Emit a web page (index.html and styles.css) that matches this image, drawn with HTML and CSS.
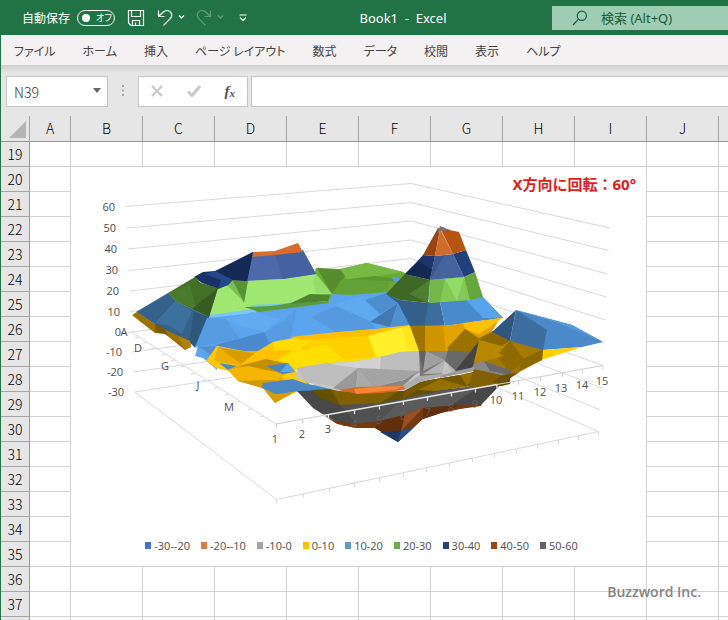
FILE: index.html
```html
<!DOCTYPE html>
<html lang="ja">
<head>
<meta charset="utf-8">
<meta name="viewport" content="width=device-width, initial-scale=1">
<title>Book1 - Excel</title>
<link rel="stylesheet" href="styles.css">
</head>
<body>
<div class="app">
  <header class="titlebar">
    <div class="quick">
      <label class="autosave">自動保存
        <input type="checkbox" class="autosave-input" role="switch">
        <span class="switch"><span class="knob"></span>オフ</span>
      </label>
      <button class="icon-btn save" aria-label="上書き保存">
        <svg width="18" height="18" viewBox="0 0 18 18"><path d="M1.5 1.5h15v15H4l-2.500-2.500zM4.500 1.500v6h9v-6M5.500 16.500v-5h7v5M8.500 16.500v-3" /></svg>
      </button>
      <button class="icon-btn undo" aria-label="元に戻す">
        <svg width="28" height="18" viewBox="0 0 28 18"><path d="M1.500 1.500v6h6M1.500 7.500L6 3.200C8.500 .8 12 1 13.700 3.300c1.700 2.300 1.200 4.600-.7 6.500L6.500 16.300"/><path d="M22 6.500l2.500 2.500L27 6.500"/></svg>
      </button>
      <button class="icon-btn redo" aria-label="やり直し" disabled>
        <svg width="28" height="18" viewBox="0 0 28 18"><path d="M14.500 1.500v6h-6M14.500 7.500L10 3.200C7.500 .8 4 1 2.300 3.300.6 5.600 1.100 7.900 3 9.800l6.500 6.500"/><path d="M22 6.500l2.500 2.500L27 6.500"/></svg>
      </button>
      <button class="icon-btn more" aria-label="クイック アクセス ツール バーのユーザー設定">
        <svg width="8" height="8" viewBox="0 0 8 8"><path d="M.5 1h7M1 3.500l3 3 3-3"/></svg>
      </button>
    </div>
    <h1 class="doc-title">Book1&nbsp; -&nbsp; Excel</h1>
    <div class="search">
      <svg width="16" height="16" viewBox="0 0 16 16"><circle cx="9.800" cy="5.800" r="4.600"/><path d="M6.500 9.200L1 15"/></svg>
      <input type="text" class="search-input" placeholder="検索 (Alt+Q)" aria-label="検索">
    </div>
  </header>

  <nav class="tabs">
    <a href="#">ファイル</a><a href="#">ホーム</a><a href="#">挿入</a><a href="#">ページ レイアウト</a><a href="#">数式</a><a href="#">データ</a><a href="#">校閲</a><a href="#">表示</a><a href="#">ヘルプ</a>
  </nav>

  <div class="formula-row">
    <div class="name-box">
      <input type="text" value="N39" aria-label="名前ボックス">
      <button aria-label="名前の一覧"><svg width="8" height="5" viewBox="0 0 8 5"><path d="M0 0h8L4 5z"/></svg></button>
    </div>
    <svg class="grip" width="3" height="12" viewBox="0 0 3 12"><path d="M0 0h2v2H0zM0 4.500h2v2H0zM0 9h2v2H0z"/></svg>
    <div class="fx-box">
      <button aria-label="キャンセル"><svg width="12" height="12" viewBox="0 0 12 12"><path d="M1 1l10 10M11 1L1 11"/></svg></button>
      <button aria-label="入力"><svg width="14" height="12" viewBox="0 0 14 12"><path class="check" d="M1 6.500l4 4L13 1"/></svg></button>
      <button class="fx" aria-label="関数の挿入">f<small>x</small></button>
    </div>
    <input type="text" class="formula" aria-label="数式バー">
  </div>

  <main class="sheet">
    <table class="grid">
      <colgroup><col class="c-head"><col class="c-a"><col class="c"><col class="c"><col class="c"><col class="c"><col class="c"><col class="c"><col class="c"><col class="c"><col class="c"><col></colgroup>
      <thead><tr><th class="corner"><svg width="17" height="17" viewBox="0 0 17 17"><path d="M17 0v17H0z"/></svg></th><th>A</th><th>B</th><th>C</th><th>D</th><th>E</th><th>F</th><th>G</th><th>H</th><th>I</th><th>J</th><th></th></tr></thead>
      <tbody>
        <tr><th>19</th><td></td><td></td><td></td><td></td><td></td><td></td><td></td><td></td><td></td><td></td><td></td></tr>
        <tr><th>20</th><td></td><td></td><td></td><td></td><td></td><td></td><td></td><td></td><td></td><td></td><td></td></tr>
        <tr><th>21</th><td></td><td></td><td></td><td></td><td></td><td></td><td></td><td></td><td></td><td></td><td></td></tr>
        <tr><th>22</th><td></td><td></td><td></td><td></td><td></td><td></td><td></td><td></td><td></td><td></td><td></td></tr>
        <tr><th>23</th><td></td><td></td><td></td><td></td><td></td><td></td><td></td><td></td><td></td><td></td><td></td></tr>
        <tr><th>24</th><td></td><td></td><td></td><td></td><td></td><td></td><td></td><td></td><td></td><td></td><td></td></tr>
        <tr><th>25</th><td></td><td></td><td></td><td></td><td></td><td></td><td></td><td></td><td></td><td></td><td></td></tr>
        <tr><th>26</th><td></td><td></td><td></td><td></td><td></td><td></td><td></td><td></td><td></td><td></td><td></td></tr>
        <tr><th>27</th><td></td><td></td><td></td><td></td><td></td><td></td><td></td><td></td><td></td><td></td><td></td></tr>
        <tr><th>28</th><td></td><td></td><td></td><td></td><td></td><td></td><td></td><td></td><td></td><td></td><td></td></tr>
        <tr><th>29</th><td></td><td></td><td></td><td></td><td></td><td></td><td></td><td></td><td></td><td></td><td></td></tr>
        <tr><th>30</th><td></td><td></td><td></td><td></td><td></td><td></td><td></td><td></td><td></td><td></td><td></td></tr>
        <tr><th>31</th><td></td><td></td><td></td><td></td><td></td><td></td><td></td><td></td><td></td><td></td><td></td></tr>
        <tr><th>32</th><td></td><td></td><td></td><td></td><td></td><td></td><td></td><td></td><td></td><td></td><td></td></tr>
        <tr><th>33</th><td></td><td></td><td></td><td></td><td></td><td></td><td></td><td></td><td></td><td></td><td></td></tr>
        <tr><th>34</th><td></td><td></td><td></td><td></td><td></td><td></td><td></td><td></td><td></td><td></td><td></td></tr>
        <tr><th>35</th><td></td><td></td><td></td><td></td><td></td><td></td><td></td><td></td><td></td><td></td><td></td></tr>
        <tr><th>36</th><td></td><td></td><td></td><td></td><td></td><td></td><td></td><td></td><td></td><td></td><td></td></tr>
        <tr><th>37</th><td></td><td></td><td></td><td></td><td></td><td></td><td></td><td></td><td></td><td></td><td></td></tr>
        <tr><th></th><td></td><td></td><td></td><td></td><td></td><td></td><td></td><td></td><td></td><td></td><td></td></tr>
      </tbody>
    </table>

    <figure class="chart">
      <figcaption>X方向に回転：60°</figcaption>
      <svg class="plot" viewBox="71 167 575 360" role="img" aria-label="3-D 等高線グラフ">
        <!-- walls and floor -->
        <g class="wall">
          <path d="M125 206.500L411 183.500 610 228M127 228L411 202.500 608.500 250.500M128 249L411 221 607.500 274M129 270.500L411 240 606.500 297M130 291L411 258.500 605.500 320M130 311.500L411 277.500 604.500 343M131 332L411 296 603 365.500M132 352L411 315 602 388M133 372L411 333 600.500 410M135 392L411 350 598.500 431.500"/>
          <path d="M131 332L276 424M135 392L276.500 499.500 598.500 431.500"/>
          <path d="M131 332l-4 1M139 337l-4 1M147 342l-4 1M156 348l-4 1M166 354l-4 1M175 360l-4 1M185 366l-4 1M195 373l-4 1M206 380l-4 1M218 387l-4 1M229 394l-4 1M240 401l-4 1M252 409l-4 1M264 416l-4 1"/>
          <path d="M276.500 499.500v4M303.500 494v4M329.500 488.500v4M354.500 483v4M379.500 478v4M403.500 473v4M426.500 468v4M449.500 463v4M472.500 458.500v4M494.500 453.500v4M516.500 449v4M537.500 444.500v4M558.500 440v4M578.500 435.500v4M598.500 431.500v4"/>
        </g>
        <!-- rear ridge and left mountain -->
        <g>
          <path fill="#6aa939" d="M316 268l24 1 27-6 36 9 8 5-24 20-37 3-19 2-22-5z"/>
          <path fill="#578d2f" d="M317 268l23 2 5 6-13 18z"/>
          <path fill="#76b943" d="M341 269l26-6 36 9-30 5-25 4z"/>
          <path fill="#5c9834" d="M341 280l33-4 29 3-2 4-12-2z"/>
          <path fill="#62a237" d="M341 280l48 1-2 12-55 2z"/>
          <path fill="#579fe8" d="M391 277l6 0 8 4-10 1z"/>
          <path fill="#5ca5ee" d="M207 317l46-6 42-6 35-3 1-8 19 1 37-3 13 10 20 23-1 15-66-3-75 9-20 6-15 8-25-6-1 16-14-12-8-2z"/>
          <path fill="#a1e873" d="M209 317l9-29 15-8 14 1 36-2 33-5 16 20-22 1-15 8-30 4-13 0 5 4z"/>
          <path fill="#96dc69" d="M316 274l16 20-16-1-3-10z"/>
          <path fill="#78c7fb" d="M207 318l2-3 46-6 1 4zM250 305l28-1 17-2-5 4-32 2z"/>
          <path fill="#5a9c39" d="M244 307l27-1 20-3 38-2 0 2-70 9z"/>
          <path fill="#4e8531" d="M289 304l21-10 20 1-2 6-37 3z"/>
          <path fill="#579437" d="M232 280l16 1-4 22z"/>
          <path fill="#7cbd55" d="M232 280l-5 5 17 17z"/>
          <path fill="#4d69a9" d="M252 256l23-2 28-4 13 24-33 5-37 2z"/>
          <path fill="#4661a0" d="M275 254l28-3 13 23-33 5z"/>
          <path fill="#d46d2d" d="M253 252l22-1 23-8 5 9-28 3-23 2z"/>
          <path fill="#183265" d="M194 277l9-5 12-1 38-19-6 29-15-1-4 5-10 4-16-6z"/>
          <path fill="#142955" d="M253 252l-6 29-14-1-17-8z"/>
          <path fill="#23488c" d="M215 271l18 9-5 5-10 3 3-8-16-6z"/>
          <path fill="#427027" d="M168 293l27-16 6 6 17 5-9 29-32-15z"/>
          <path fill="#4a7b2c" d="M177 289l-9 4 9 9 19 7-6-24z"/>
          <path fill="#375b22" d="M218 288l-9 29-17-8z"/>
          <path fill="#34628b" d="M136 312l32-19 9 9 32 15-14 31-5-6-20-9-14-8z"/>
          <path fill="#3c719d" d="M155 323l20-22 17 10-10 23-12-8z"/>
          <path fill="#2e577c" d="M209 317l-14 30-6-5 5-30z"/>
          <path fill="#9c7300" d="M132 315l5-3 19 13 14 7 20 9 1 6-6 3-20-16-10-1-13-10z"/>
          <path fill="#7c5b00" d="M155 324l9 4 4 8-3-2-10-2z"/>
          <path fill="#b08400" d="M178 336l12 5 1 5-6 4z"/>
        </g>
        <!-- blue slope facets -->
        <g>
          <path fill="#4b8bcd" d="M265 332l-22 19-28-6zM265 332l8 10-15 9-15 0z"/>
          <path fill="#538fcd" d="M195 347l20-1 28-6-28 6 1 14-13-11z"/>
          <path fill="#579be0" d="M207 318l-12 29 45-8-14-20zM285 320l12-13-6 30-22 6-5-11z"/>
          <path fill="#62abf0" d="M226 319l27-7 27 7-15 13-23-5z"/>
          <path fill="#5599de" d="M311 317l26-12 33 17 6 7-40 3z"/>
          <path fill="#5fa9ef" d="M334 305l27-9 37 7-28 18z"/>
          <path fill="#4b8fce" d="M365 300l22-7 11 10-18 11z"/>
          <path fill="#4179b0" d="M398 303l-28 19 20 5z"/>
          <path fill="#4e91d2" d="M398 303l12 23-20 1z"/>
        </g>
        <!-- yellow belt and left shore -->
        <g>
          <path fill="#ffc800" d="M217 346l26 5 15 0 15-9 27-5 40-5 36-3 34-4 9 26-19 3-20 5-24 4-30 2-30 5-30 2-33 0-17-4-10-7z"/>
          <path fill="#ffdb00" d="M273 342l27-5 26-3 43 2 12 21-25 4-30 2-30 6-20-10z"/>
          <path fill="#ffcf00" d="M300 348l26-14 43 2 8 21-45 3z"/>
          <path fill="#ffdf00" d="M280 358l45-14 20 17-48 8z"/>
          <path fill="#ffbf00" d="M290 337l48-5 40-3 12-1-20 8-24 1-44 3z"/>
          <path fill="#fff02a" d="M368 336l22-6 20-4 10 25-20 2-24 4z"/>
          <path fill="#ffe51c" d="M402 328l8-2 9 25-10 1z"/>
          <path fill="#4a8acb" d="M215 360l4 3 19 3-4 5-6-1z"/>
          <path fill="#edb000" d="M218 347l25 4 15 0-18 14-22-3-4-2z"/>
          <path fill="#d99d00" d="M218 347l38 7-15 10z"/>
          <path fill="#ffc000" d="M258 351l-18 14 38-6 15-9z"/>
          <path fill="#e8aa00" d="M236 366l22-4 30 2 7 7 5 4 10 9-5 6-9 2-12 6-9 5-12-15-25-7-10-11z"/>
          <path fill="#c59000" d="M238 366l28-7 23 5-10 8z"/>
          <path fill="#f4b600" d="M228 370l20-4 35 8-6 6-39 1z"/>
          <path fill="#d19900" d="M238 381l39-1-15 8z"/>
          <path fill="#ffcd00" d="M281 376l14-6 10 9 2 6-22-5z"/>
          <path fill="#4784c1" d="M266 366l22-3 7 9-13 2z"/>
          <path fill="#5ca4ee" d="M288 363l-8 9 15 0z"/>
          <path fill="#4a87c5" d="M263 383l30-4 14 5 35 5-2 2-42 0-23 4-13-7z"/>
          <path fill="#d69c00" d="M263 388l12 6 17-1-17 10z"/>
        </g>
        <!-- underside -->
        <g>
          <path fill="#484848" d="M297 391l45-1 98 0 62-7-20 21-23 5-50 9-30 4-35 4-20-11-11-7z"/>
          <path fill="#5a5a5a" d="M340 405l63-7 37-7 40-5-38 25-62 11z"/>
          <path fill="#515151" d="M340 404l16 20 24-3 23-23z"/>
          <path fill="#655000" d="M311 390l20-1 26 5 46-5 15-7 42-7 18-4 32 7 0 6-8 2-42 0-24 5-30 7-26 5-40 2-20-7z"/>
          <path fill="#806000" d="M331 389l26 5 46-6-23 15-40 2z"/>
          <path fill="#967100" d="M406 389l14-7 40-7 20-4-14 16-30 4z"/>
          <path fill="#785a00" d="M476 369l34 7-9 8-33 4z"/>
          <path fill="#745700" d="M418 390l22-11 28 8-8-12-42 7-12 6-4 11z"/>
          <path fill="#733910" d="M323 415l10 5 23 4 24-3 23-6 20-7 37-3 22-1-1 2-21 3-19 4-18 6-25 23-23-14-20 0-18-4z"/>
          <path fill="#995020" d="M376 428l27-13 20-7-22 23z"/>
          <path fill="#612f0d" d="M380 421l-5 7 7 4 19-1 4-16zM423 408l37-3-19 8-18 6z"/>
          <path fill="#1f3763" d="M380 432l20-1 12-2-14 13z"/>
          <path fill="#294d89" d="M398 442l3-12 12-2z"/>
        </g>
        <!-- grey basin -->
        <g>
          <path fill="#c6c6c6" d="M297 368l30-5 30-2 23-4 20-5 20-1 18 0 24 20-42 11-16 9-46 1-20-1-20-5-22-8z"/>
          <path fill="#bdbdbd" d="M297 368l30-5 31 5-20 19-33-5z"/>
          <path fill="#d2d2d2" d="M330 364l27-3 24-4-1 12-22-1z"/>
          <path fill="#bebebe" d="M381 357l19-5 19-1 4 20-43-2z"/>
          <path fill="#999999" d="M358 368l-25 20 10 3 13-2z"/>
          <path fill="#aaaaaa" d="M358 368l18 20-20 1z"/>
          <path fill="#8c8c8c" d="M358 368l23 9-7 10z"/>
          <path fill="#a4a4a4" d="M358 368l65 3-17 8-32 8z"/>
          <path fill="#878787" d="M374 387l30-7 14-8-15 14z"/>
          <path fill="#aeaeae" d="M403 386l17-11 55-7 3 2-37 7-21 5-14 7z"/>
          <path fill="#d66a24" d="M339 390l18-3 46-1 3 3-23 4-26 1z"/>
          <path fill="#f68536" d="M354 389l20-2 30-1-10 4-38 4z"/>
          <path fill="#767676" d="M419 351l42-1 19 4-2 16-18 2-40 4z"/>
          <path fill="#a0a0a0" d="M425 350l20 10-22 11z"/>
          <path fill="#878787" d="M425 350l35 0-15 10z"/>
          <path fill="#5e5e5e" d="M460 350l6-1 7 19-13 4-15-12z"/>
          <path fill="#b3b3b3" d="M445 360l14 13-36 1z"/>
          <path fill="#c3c3c3" d="M445 360l-3 14 11 0z"/>
          <path fill="#626262" d="M419 351l7-1-3 21z"/>
        </g>
        <!-- central peak -->
        <g>
          <path fill="#335f89" d="M386 294l14 6 29 3-3 23-16 0-12-23z"/>
          <path fill="#3b6e9d" d="M428 302l12 0 5 24-20 0z"/>
          <path fill="#488bcc" d="M440 302l42-6 21 22-23 3-35 5z"/>
          <path fill="#58a3eb" d="M466 300l16-4 21 22-20 0z"/>
          <path fill="#9e7400" d="M410 326l17-1-2 26-6 0z"/>
          <path fill="#ce9500" d="M425 326l20-1 3 26-23 0z"/>
          <path fill="#e2a200" d="M443 326l37-5 20-3-7 12-18 14-20 7-9 0z"/>
          <path fill="#ffc100" d="M463 323l40-5-24 16-14-5z"/>
          <path fill="#3f6827" d="M405 274l25 6-2 23-28-3-14-6z"/>
          <path fill="#4d7f30" d="M430 280l-2 23-19-9z"/>
          <path fill="#82c957" d="M430 280l34-3 7 23-42 3z"/>
          <path fill="#73b64a" d="M430 280l15-1-5 23-11 1z"/>
          <path fill="#91dc64" d="M445 279l19-2-7 24z"/>
          <path fill="#65a63d" d="M464 277l11-5 8 25-13 3z"/>
          <path fill="#1c356b" d="M423 255l12 1-5 24-25-6 8-8z"/>
          <path fill="#132950" d="M413 266l6-5 13 9-3 9-24-5z"/>
          <path fill="#46639f" d="M435 256l18-2 11 23-34 3z"/>
          <path fill="#3b568e" d="M435 256l9 0-14 24z"/>
          <path fill="#233f79" d="M453 254l13-4 9 22-11 5z"/>
          <path fill="#974611" d="M438 228l2 1-5 27-12-1z"/>
          <path fill="#d16b2b" d="M440 229l13 25-18 2z"/>
          <path fill="#b65412" d="M440 228l19 4 7 18-13 4z"/>
          <path fill="#747474" d="M440 226l10 4-10 1-3 3z"/>
        </g>
        <!-- right hill -->
        <g>
          <path fill="#4a8aca" d="M516 310l56 15 31 17-21 5-39 3-10-25z"/>
          <path fill="#5498de" d="M516 310l42 13 45 19-31-17z"/>
          <path fill="#ffcf00" d="M543 350l39-3-41 13z"/>
          <path fill="#a27800" d="M465 329l14 9 13-7 19 10 32 8-1 11-32 17-30-10-8-4-25-15z"/>
          <path fill="#b88900" d="M479 340l13-8 18 9-14 14z"/>
          <path fill="#8a6700" d="M479 340l13-8 18 9-8 5z"/>
          <path fill="#9a7200" d="M465 329l14 11-8 13-23-3z"/>
          <path fill="#8e6a00" d="M510 341l15 19-15 14-13-18z"/>
          <path fill="#a47a00" d="M510 341l33 8-18 11z"/>
          <path fill="#8b6700" d="M543 349l-1 11-24 11 5-12z"/>
          <path fill="#bd8c00" d="M479 340l18 15-23 7z"/>
          <path fill="#696969" d="M448 350l24 3-16 18-11-10z"/>
          <path fill="#444444" d="M479 341l-7 29-17 1z"/>
          <path fill="#b68700" d="M479 341l-3 23 28-8z"/>
          <path fill="#888888" d="M475 363l9-2 28 10-1 5-10 0-30-7z"/>
          <path fill="#696969" d="M484 361l28 10-2 4-20-4z"/>
          <path fill="#9c9c9c" d="M440 376l16-5 19-4-1 4-34 7z"/>
          <path fill="#806000" d="M474 369l27 6 18-3-18 12-33 4z"/>
          <path fill="#6b5100" d="M501 376l17-3-17 11-8-2z"/>
          <path fill="#2e567f" d="M516 310l-24 22 18 9z"/>
          <path fill="#3d6e9f" d="M516 310l31 20-4 20-33-9z"/>
        </g>
        <!-- series axis -->
        <path class="axis" d="M276 424L323 415.500M497 384.500L603 365.500M276.500 424v4M302.500 419v4M518.500 381v4M540.500 377v4M562.500 373v4M582.500 369v4M603 365.500v4"/>
        <path class="axis-over" d="M323 415.500L497 384.500M328.500 414.500v4M354.500 410v4M379.500 405.500v4M403.500 401v4M427.500 397v4M451.500 392.500v4M475.500 388.500v4M497 384.500v4"/>
        <g class="lbl lbl-end">
          <text x="115" y="211">60</text><text x="116" y="232">50</text><text x="117" y="253">40</text><text x="118" y="274">30</text><text x="119" y="295">20</text><text x="120" y="316">10</text><text x="121" y="336">0</text><text x="122" y="356">-10</text><text x="123" y="376">-20</text><text x="124" y="396">-30</text>
        </g>
        <g class="lbl lbl-mid">
          <text x="124" y="336">A</text><text x="138" y="352">D</text><text x="165" y="370">G</text><text x="198" y="389">J</text><text x="229" y="411">M</text>
          <text x="275" y="443">1</text><text x="302" y="438">2</text><text x="328" y="433">3</text><text x="496" y="404">10</text><text x="518" y="400">11</text><text x="540" y="396">12</text><text x="561" y="392">13</text><text x="582" y="389">14</text><text x="602" y="385">15</text>
        </g>
        <g class="lbl lbl-mid lbl-dim">
          <text x="354" y="428">4</text><text x="379" y="424">5</text><text x="403" y="420">6</text><text x="428" y="416">7</text><text x="451" y="412">8</text><text x="475" y="408">9</text>
        </g>
      </svg>
      <ul class="legend">
        <li><i class="k1"></i>-30--20</li><li><i class="k2"></i>-20--10</li><li><i class="k3"></i>-10-0</li><li><i class="k4"></i>0-10</li><li><i class="k5"></i>10-20</li><li><i class="k6"></i>20-30</li><li><i class="k7"></i>30-40</li><li><i class="k8"></i>40-50</li><li><i class="k9"></i>50-60</li>
      </ul>
    </figure>
    <p class="watermark">Buzzword Inc.</p>
  </main>
</div>
</body>
</html>
```
FILE: styles.css
```css
* { box-sizing: border-box; }
html, body { height: 100%; }
body {
  margin: 0;
  overflow: hidden;
  background: #fff;
  font-family: "Noto Sans", "Noto Sans CJK JP", sans-serif;
  font-size: 12px;
  color: #444;
}
button { margin: 0; padding: 0; border: 0; background: none; font: inherit; color: inherit; }
input { font: inherit; }

.app { display: flex; flex-direction: column; height: 100%; border-left: 1px solid #217346; }

/* title bar */
.titlebar {
  flex: none;
  display: grid;
  grid-template-columns: 253px 1fr 176px;
  align-items: center;
  height: 35px;
  background: #217346;
  color: #fff;
}
.quick { display: flex; align-items: center; padding-left: 21px; }
.autosave { display: flex; align-items: center; gap: 7px; white-space: nowrap; }
.autosave-input { position: absolute; opacity: 0; }
.switch {
  display: flex;
  align-items: center;
  gap: 6px;
  width: 38px;
  height: 16px;
  padding-left: 4px;
  border: 1px solid #fff;
  border-radius: 8px;
  font-size: 9px;
  font-feature-settings: "palt";
}
.knob { width: 8px; height: 8px; border-radius: 50%; background: #fff; }
.icon-btn { display: flex; flex: none; }
.icon-btn svg { fill: none; stroke: #fff; stroke-width: 1.2; }
.save { margin-left: 12px; }
.undo { margin-left: 12px; }
.redo { margin-left: 11px; opacity: .3; }
.more { margin-left: 15px; }
.doc-title { margin: 0; text-align: center; font-size: 13px; font-weight: 400; }
.search {
  display: flex;
  align-items: center;
  gap: 13px;
  height: 24px;
  padding-left: 20px;
  background: #9fcdb3;
  font-size: 13px;
}
.search svg { flex: none; fill: none; stroke: #185c37; stroke-width: 1.2; }
.search-input { width: 100%; min-width: 0; padding: 0; border: 0; outline: 0; background: none; color: #185c37; }
.search-input::placeholder { color: #185c37; opacity: 1; }

/* ribbon tabs */
.tabs {
  flex: none;
  display: flex;
  align-items: center;
  gap: 27px;
  height: 30px;
  padding-left: 13px;
  background: #f3f1f1;
  font-family: "Noto Sans CJK JP", sans-serif;
  font-size: 12px;
  font-feature-settings: "palt";
  white-space: nowrap;
}
.tabs a { color: #444; text-decoration: none; }

/* formula bar */
.formula-row {
  flex: none;
  display: flex;
  align-items: center;
  height: 51px;
  padding: 1px 0 0 5px;
  background: linear-gradient(#cfcfcf, #e6e6e6 8px);
}
.name-box, .fx-box, .formula { height: 31px; border: 1px solid #c6c6c6; background: #fff; }
.name-box { display: flex; align-items: center; width: 102px; padding: 2px 6px 0 7px; }
.name-box input { flex: 1; min-width: 0; padding: 0; border: 0; outline: 0; font-family: "Noto Sans CJK JP", sans-serif; font-size: 14px; font-weight: 300; color: #333; }
.name-box button { display: flex; padding-bottom: 4px; }
.name-box svg { fill: #666; }
.grip { margin: 0 13px 0 14px; fill: #a8a8a8; }
.fx-box { display: flex; align-items: center; justify-content: space-between; width: 110px; padding: 0 12px; }
.fx-box button { display: flex; align-items: center; }
.fx-box svg { fill: none; stroke: #c8c8c8; stroke-width: 2; }
.fx-box .check { stroke-width: 3; }
.fx { font: italic bold 15px "Liberation Serif", serif; color: #555; }
.fx small { padding-top: 3px; font-size: 11px; }
.formula { flex: 1; min-width: 0; margin-left: 3px; border-right: 0; outline: 0; }

/* worksheet */
.sheet { position: relative; flex: 1; overflow: hidden; }
.grid {
  width: 100%;
  border-collapse: separate;
  border-spacing: 0;
  table-layout: fixed;
  font-family: "Noto Sans CJK JP", sans-serif;
  font-size: 14px;
  line-height: 22px;
}
.c-head { width: 29px; }
.c-a { width: 41px; }
.c { width: 72px; }
.grid th, .grid td { height: 25px; padding: 0; border-right: 1px solid #d2d2d2; border-bottom: 1px solid #d2d2d2; }
.grid th { padding-bottom: 1px; font-weight: 300; color: #000; background: #e6e6e6; }
.grid thead th { height: 26px; border-right-color: #a6a6a6; border-bottom-color: #979797; }
.grid tbody th { border-right-color: #979797; border-bottom-color: #a6a6a6; }
.grid tr > :last-child { border-right: 0; }
.corner svg { display: block; margin: 3px 3px 0 auto; fill: #b5b5b5; }

/* chart object */
.chart {
  position: absolute;
  top: 51px;
  left: 70px;
  width: 575px;
  margin: 0;
  padding-bottom: 12px;
  background: #fff;
}
.chart figcaption {
  position: absolute;
  top: 6px;
  right: 10px;
  font-size: 15px;
  font-weight: 700;
  line-height: 22px;
  color: #e31b1b;
}
.plot { display: block; width: 100%; }
.wall { fill: none; stroke: #d9d9d9; stroke-width: 1; }
.axis { fill: none; stroke: #cfcfcf; }
.axis-over { fill: none; stroke: #e8e8e8; stroke-width: 1.3; }
.lbl { font-family: "Open Sans", sans-serif; font-size: 11px; fill: #4d4d4d; }
.lbl-end { text-anchor: end; }
.lbl-mid { text-anchor: middle; }
.lbl-dim { fill: #737373; opacity: .55; }
.legend {
  display: flex;
  justify-content: center;
  gap: 11px;
  margin: 0;
  padding: 10px 0 0 6px;
  list-style: none;
  font-family: "Open Sans", sans-serif;
  font-size: 11px;
  line-height: 17px;
  color: #4d4d4d;
}
.legend li { display: flex; align-items: center; gap: 3px; white-space: nowrap; }
.legend i { width: 6px; height: 7px; }
.k1 { background: #4472c4; }
.k2 { background: #dd7b3c; }
.k3 { background: #a5a5a5; }
.k4 { background: #ffc000; }
.k5 { background: #5b9bd5; }
.k6 { background: #70ad47; }
.k7 { background: #264478; }
.k8 { background: #9e480e; }
.k9 { background: #636363; }

.watermark {
  position: absolute;
  right: 27px;
  bottom: 18px;
  margin: 0;
  font-family: "Open Sans", sans-serif;
  font-size: 14px;
  font-weight: 600;
  line-height: 20px;
  color: #858585;
}
```
